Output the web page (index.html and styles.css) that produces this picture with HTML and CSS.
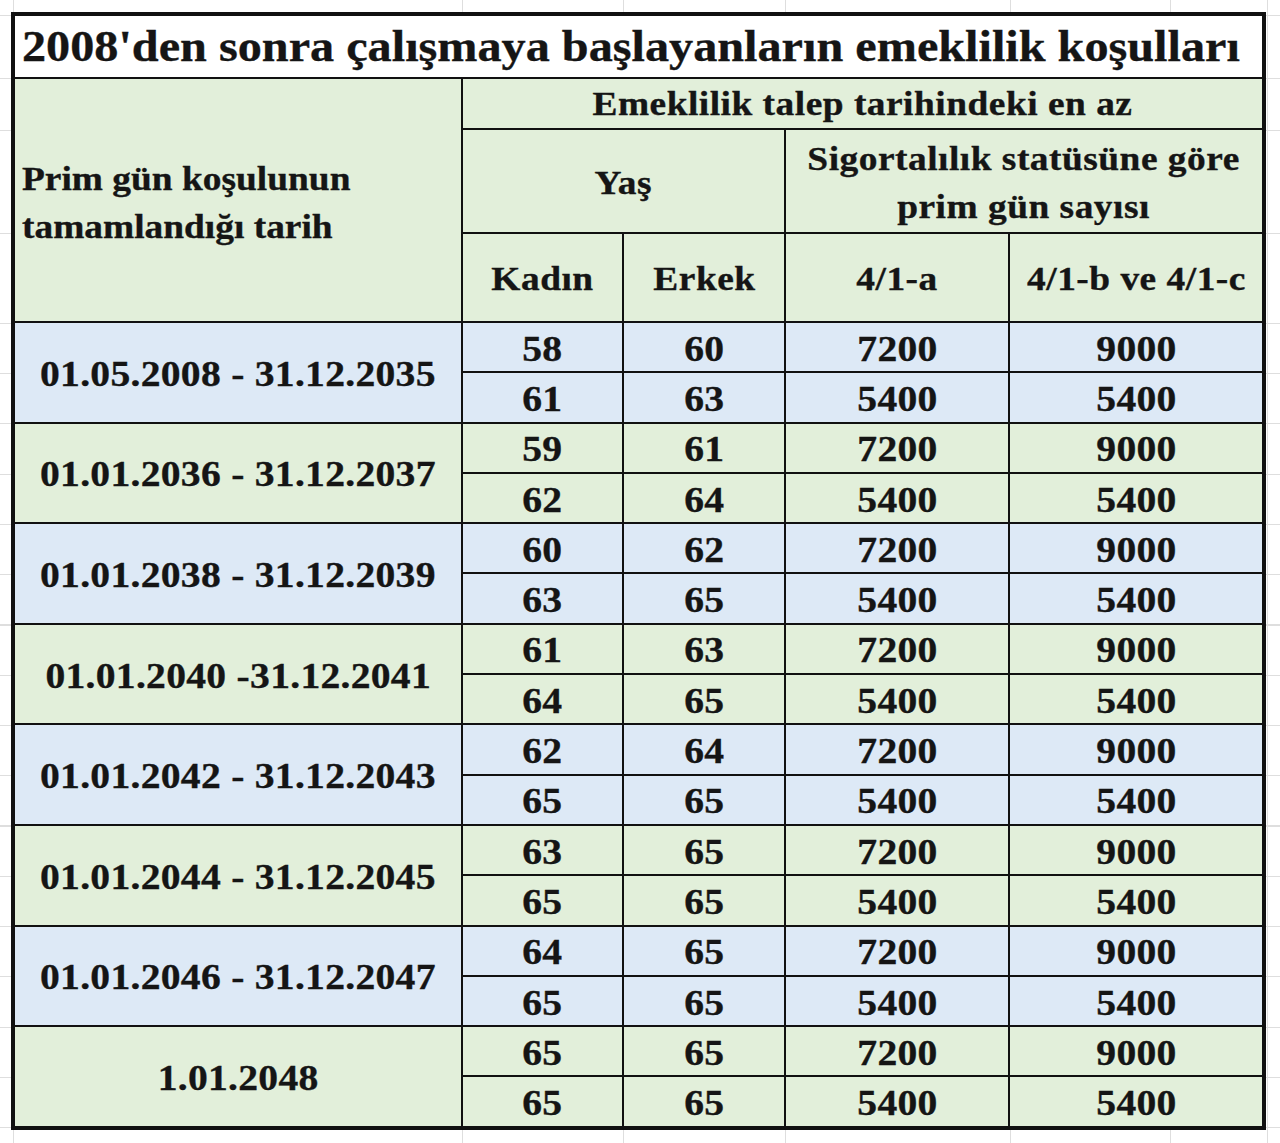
FILE: index.html
```html
<!DOCTYPE html>
<html lang="tr">
<head>
<meta charset="utf-8">
<title>Emeklilik koşulları</title>
<link rel="stylesheet" href="styles.css">
</head>
<body>
<div class="sheet">
  <div class="grid">
    <div class="cell title"><span class="t">2008'den sonra çalışmaya başlayanların emeklilik koşulları</span></div>
    <div class="cell head h-left"><span class="t">Prim gün koşulunun<br>tamamlandığı tarih</span></div>
    <div class="cell head h-top"><span class="t">Emeklilik talep tarihindeki en az</span></div>
    <div class="cell head h-yas"><span class="t">Yaş</span></div>
    <div class="cell head h-sig"><span class="t">Sigortalılık statüsüne göre<br>prim gün sayısı</span></div>
    <div class="cell head"><span class="t">Kadın</span></div>
    <div class="cell head"><span class="t">Erkek</span></div>
    <div class="cell head"><span class="t">4/1-a</span></div>
    <div class="cell head"><span class="t">4/1-b ve 4/1-c</span></div>

    <div class="cell date blue"><span class="t">01.05.2008 - 31.12.2035</span></div>
    <div class="cell blue"><span class="t">58</span></div><div class="cell blue"><span class="t">60</span></div><div class="cell blue"><span class="t">7200</span></div><div class="cell blue"><span class="t">9000</span></div>
    <div class="cell blue"><span class="t">61</span></div><div class="cell blue"><span class="t">63</span></div><div class="cell blue"><span class="t">5400</span></div><div class="cell blue"><span class="t">5400</span></div>

    <div class="cell date green"><span class="t">01.01.2036 - 31.12.2037</span></div>
    <div class="cell green"><span class="t">59</span></div><div class="cell green"><span class="t">61</span></div><div class="cell green"><span class="t">7200</span></div><div class="cell green"><span class="t">9000</span></div>
    <div class="cell green"><span class="t">62</span></div><div class="cell green"><span class="t">64</span></div><div class="cell green"><span class="t">5400</span></div><div class="cell green"><span class="t">5400</span></div>

    <div class="cell date blue"><span class="t">01.01.2038 - 31.12.2039</span></div>
    <div class="cell blue"><span class="t">60</span></div><div class="cell blue"><span class="t">62</span></div><div class="cell blue"><span class="t">7200</span></div><div class="cell blue"><span class="t">9000</span></div>
    <div class="cell blue"><span class="t">63</span></div><div class="cell blue"><span class="t">65</span></div><div class="cell blue"><span class="t">5400</span></div><div class="cell blue"><span class="t">5400</span></div>

    <div class="cell date green"><span class="t">01.01.2040 -31.12.2041</span></div>
    <div class="cell green"><span class="t">61</span></div><div class="cell green"><span class="t">63</span></div><div class="cell green"><span class="t">7200</span></div><div class="cell green"><span class="t">9000</span></div>
    <div class="cell green"><span class="t">64</span></div><div class="cell green"><span class="t">65</span></div><div class="cell green"><span class="t">5400</span></div><div class="cell green"><span class="t">5400</span></div>

    <div class="cell date blue"><span class="t">01.01.2042 - 31.12.2043</span></div>
    <div class="cell blue"><span class="t">62</span></div><div class="cell blue"><span class="t">64</span></div><div class="cell blue"><span class="t">7200</span></div><div class="cell blue"><span class="t">9000</span></div>
    <div class="cell blue"><span class="t">65</span></div><div class="cell blue"><span class="t">65</span></div><div class="cell blue"><span class="t">5400</span></div><div class="cell blue"><span class="t">5400</span></div>

    <div class="cell date green"><span class="t">01.01.2044 - 31.12.2045</span></div>
    <div class="cell green"><span class="t">63</span></div><div class="cell green"><span class="t">65</span></div><div class="cell green"><span class="t">7200</span></div><div class="cell green"><span class="t">9000</span></div>
    <div class="cell green"><span class="t">65</span></div><div class="cell green"><span class="t">65</span></div><div class="cell green"><span class="t">5400</span></div><div class="cell green"><span class="t">5400</span></div>

    <div class="cell date blue"><span class="t">01.01.2046 - 31.12.2047</span></div>
    <div class="cell blue"><span class="t">64</span></div><div class="cell blue"><span class="t">65</span></div><div class="cell blue"><span class="t">7200</span></div><div class="cell blue"><span class="t">9000</span></div>
    <div class="cell blue"><span class="t">65</span></div><div class="cell blue"><span class="t">65</span></div><div class="cell blue"><span class="t">5400</span></div><div class="cell blue"><span class="t">5400</span></div>

    <div class="cell date green"><span class="t">1.01.2048</span></div>
    <div class="cell green"><span class="t">65</span></div><div class="cell green"><span class="t">65</span></div><div class="cell green"><span class="t">7200</span></div><div class="cell green"><span class="t">9000</span></div>
    <div class="cell green"><span class="t">65</span></div><div class="cell green"><span class="t">65</span></div><div class="cell green"><span class="t">5400</span></div><div class="cell green"><span class="t">5400</span></div>
  </div>
</div>
</body>
</html>
```
FILE: styles.css
```css
html, body {
  margin: 0;
  padding: 0;
}
body {
  width: 1280px;
  height: 1143px;
  overflow: hidden;
  background-color: #fff;
  background-image:
    linear-gradient(#dedede, #dedede),
    linear-gradient(#dedede, #dedede),
    linear-gradient(#dedede, #dedede),
    linear-gradient(#dedede, #dedede),
    linear-gradient(#dedede, #dedede),
    linear-gradient(#dedede, #dedede),
    linear-gradient(#dedede, #dedede),
    linear-gradient(#dedede, #dedede),
    linear-gradient(#dedede, #dedede),
    linear-gradient(#dedede, #dedede),
    linear-gradient(#dedede, #dedede),
    repeating-linear-gradient(to bottom, #dedede 0 1px, transparent 1px 50.25px);
  background-size:
    1px 100%, 1px 100%, 1px 100%, 1px 100%, 1px 100%, 1px 100%, 1px 100%,
    100% 1px, 100% 1px, 100% 1px, 100% 1px,
    100% 806px;
  background-position:
    13px 0, 462px 0, 623px 0, 785px 0, 1010px 0, 1170px 0, 1267px 0,
    0 15px, 0 78px, 0 130px, 0 233px,
    0 323px;
  background-repeat: no-repeat;
  font-family: "Liberation Serif", "Times New Roman", serif;
  font-weight: bold;
  color: #151515;
}
.sheet {
  padding: 12px 0 0 11px;
}
.grid {
  display: grid;
  width: 1255px;
  box-sizing: border-box;
  padding: 4px;
  gap: 2px;
  background: #111;
  grid-template-columns: 446px 159px 160px 222px 252px;
  grid-template-rows: 61px 49px 102px 87px repeat(16, 48.3px);
}
.cell {
  display: flex;
  align-items: center;
  justify-content: center;
  text-align: center;
  font-size: 36px;
  line-height: 1;
  white-space: nowrap;
  padding-top: 3px;
}
.t {
  display: inline-block;
  transform: scaleX(1.1);
  transform-origin: center center;
  letter-spacing: 0.25px;
  -webkit-text-stroke: 0.35px #151515;
}
.title {
  grid-column: 1 / 6;
  background: #fff;
  justify-content: flex-start;
  padding-left: 7px;
  padding-top: 1px;
  font-size: 44px;
}
.title .t {
  transform: scaleX(1.096);
  transform-origin: left center;
  letter-spacing: 0;
}
.head {
  background: #e2efda;
  font-size: 34px;
  line-height: 48px;
}
.head .t {
  letter-spacing: 0.45px;
}
.h-left {
  grid-row: 2 / 5;
  justify-content: flex-start;
  text-align: left;
  padding-left: 7px;
  padding-top: 6px;
}
.h-left .t {
  transform-origin: left center;
  letter-spacing: 0;
}
.h-top {
  grid-column: 2 / 6;
  padding-top: 1px;
}
.h-yas {
  grid-column: 2 / 4;
}
.h-sig {
  grid-column: 4 / 6;
  padding-top: 3px;
}
.date {
  grid-row: span 2;
}
.blue {
  background: #dde9f6;
}
.green {
  background: #e2efda;
}
```
